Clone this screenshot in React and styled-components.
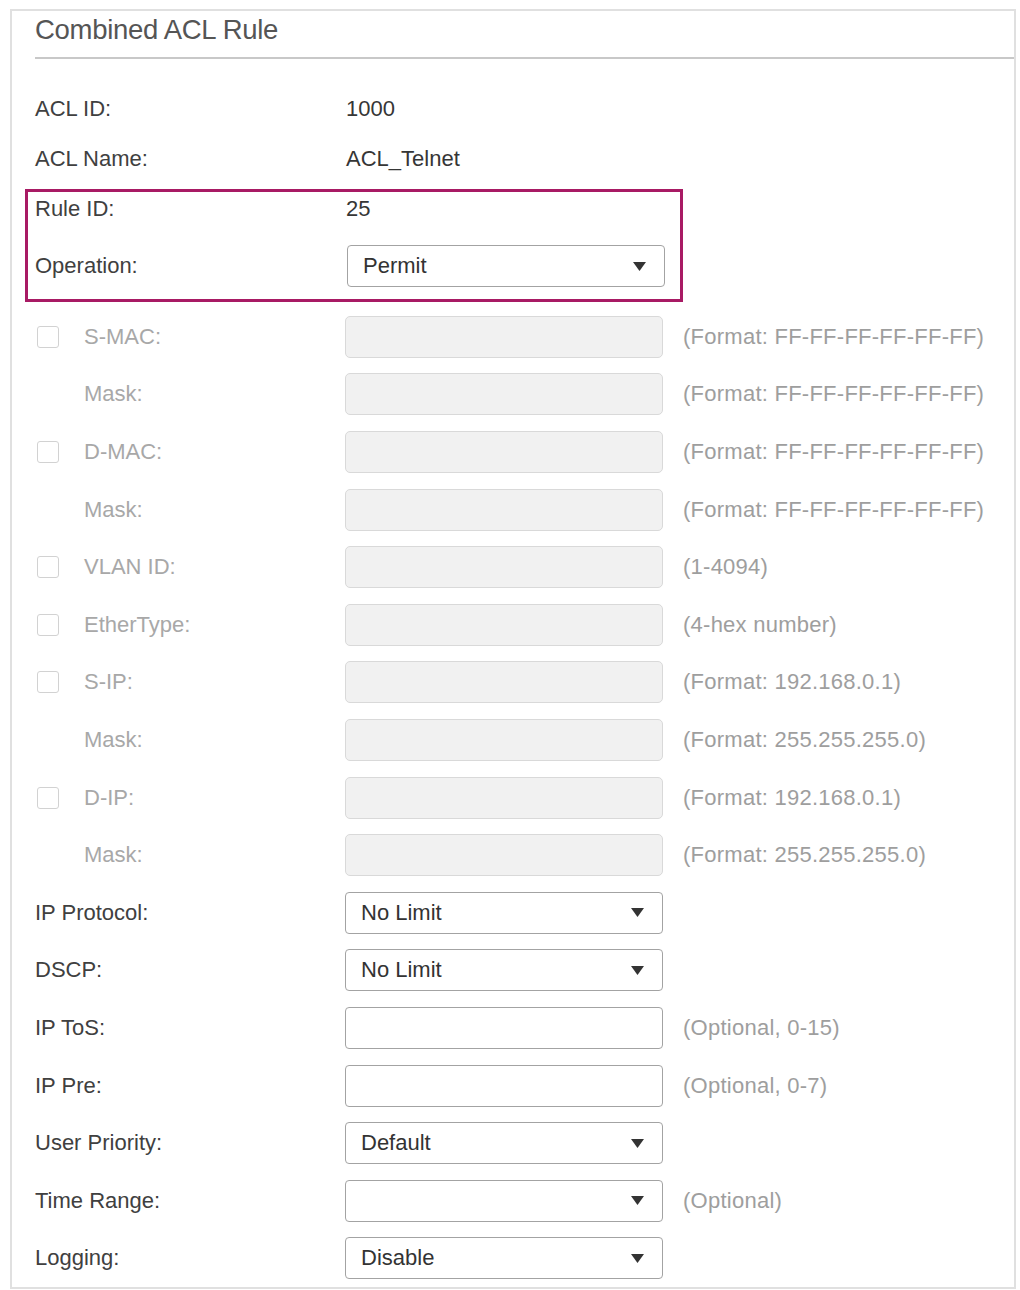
import React from 'react'
import styled, { createGlobalStyle } from 'styled-components'

const GlobalStyle = createGlobalStyle`
  html, body {
    margin: 0;
    padding: 0;
    background: #fff;
  }
  body {
    font-family: "Liberation Sans", Arial, sans-serif;
  }
`

const Page = styled.div`
  padding: 9px 0 0 10px;
`

const Frame = styled.div`
  width: 1006px;
  height: 1280px;
  box-sizing: border-box;
  border: 2px solid #e0e0e0;
`

const Header = styled.div`
  margin-left: 23px;
  height: 46px;
  line-height: 38px;
  font-size: 27.5px;
  letter-spacing: -0.3px;
  color: #555;
  border-bottom: 2px solid #c8c8c8;
`

const Body = styled.div`
  padding: 25px 0 0 23px;
`

const Row = styled.div`
  display: grid;
  grid-template-columns: 290px 318px auto;
  column-gap: 20px;
  align-items: center;
  height: ${p => p.$h}px;
  margin-top: ${p => p.$mt || 0}px;
  font-size: 22px;
`

const Highlight = styled.div`
  margin: 5px 0 0 -10px;
  width: 658px;
  box-sizing: border-box;
  border: 3px solid #a81a64;
  padding: 0 0 12px 7px;
`

const Group = styled.div`
  margin-top: 6px;
`

const LabelCell = styled.div`
  display: flex;
  align-items: center;
  padding-left: ${p => (p.$indent ? 49 : 0)}px;
  color: ${p => (p.$disabled ? '#a8a8a8' : '#404040')};
`

const Check = styled.span`
  width: 22px;
  height: 22px;
  box-sizing: border-box;
  border: 1.5px solid #d2d2d2;
  border-radius: 3px;
  margin: 0 25px 0 2px;
`

const Value = styled.div`
  color: #363636;
  padding-left: 1px;
`

const Input = styled.div`
  width: 318px;
  height: 42px;
  box-sizing: border-box;
  border: ${p => (p.$disabled ? '1px solid #d9d9d9' : '1.5px solid #a3a3a3')};
  background: ${p => (p.$disabled ? '#f1f1f1' : '#fff')};
  border-radius: ${p => (p.$disabled ? 5 : 4)}px;
`

const SelectBox = styled.div`
  width: 318px;
  height: 42px;
  box-sizing: border-box;
  border: 1.5px solid #a3a3a3;
  border-radius: 4px;
  background: #fff;
  display: flex;
  align-items: center;
  justify-content: space-between;
  padding: 0 18px 0 15px;
  margin-left: ${p => p.$shift || 0}px;
  color: #333;
`

const Hint = styled.div`
  color: #9e9e9e;
  letter-spacing: 0.25px;
  white-space: nowrap;
`

const Arrow = () => (
  <svg width="13" height="9" viewBox="0 0 13 9">
    <polygon points="0,0 13,0 6.5,9" fill="#333" />
  </svg>
)

const Select = ({ value, shift }) => (
  <SelectBox $shift={shift}>
    <span>{value}</span>
    <Arrow />
  </SelectBox>
)

const filters = [
  { label: 'S-MAC:', check: true, hint: '(Format: FF-FF-FF-FF-FF-FF)' },
  { label: 'Mask:', hint: '(Format: FF-FF-FF-FF-FF-FF)' },
  { label: 'D-MAC:', check: true, hint: '(Format: FF-FF-FF-FF-FF-FF)' },
  { label: 'Mask:', hint: '(Format: FF-FF-FF-FF-FF-FF)' },
  { label: 'VLAN ID:', check: true, hint: '(1-4094)' },
  { label: 'EtherType:', check: true, hint: '(4-hex number)' },
  { label: 'S-IP:', check: true, hint: '(Format: 192.168.0.1)' },
  { label: 'Mask:', hint: '(Format: 255.255.255.0)' },
  { label: 'D-IP:', check: true, hint: '(Format: 192.168.0.1)' },
  { label: 'Mask:', hint: '(Format: 255.255.255.0)' },
]

const options = [
  { label: 'IP Protocol:', select: 'No Limit' },
  { label: 'DSCP:', select: 'No Limit' },
  { label: 'IP ToS:', hint: '(Optional, 0-15)' },
  { label: 'IP Pre:', hint: '(Optional, 0-7)' },
  { label: 'User Priority:', select: 'Default' },
  { label: 'Time Range:', select: '', hint: '(Optional)' },
  { label: 'Logging:', select: 'Disable' },
]

const ROW = 57.6

const App = () => {
  return (
    <Page>
      <GlobalStyle />
      <Frame>
        <Header>Combined ACL Rule</Header>
        <Body>
          <Row $h={50}>
            <LabelCell>ACL ID:</LabelCell>
            <Value>1000</Value>
          </Row>
          <Row $h={50}>
            <LabelCell>ACL Name:</LabelCell>
            <Value>ACL_Telnet</Value>
          </Row>

          <Highlight>
            <Row $h={34}>
              <LabelCell>Rule ID:</LabelCell>
              <Value>25</Value>
            </Row>
            <Row $h={42} $mt={19}>
              <LabelCell>Operation:</LabelCell>
              <Select value="Permit" shift={2} />
            </Row>
          </Highlight>

          <Group>
            {filters.map((f, i) => (
              <Row $h={ROW} key={i}>
                <LabelCell $disabled $indent={!f.check}>
                  {f.check && <Check />}
                  {f.label}
                </LabelCell>
                <Input $disabled />
                <Hint>{f.hint}</Hint>
              </Row>
            ))}
            {options.map((o, i) => (
              <Row $h={ROW} key={i}>
                <LabelCell>{o.label}</LabelCell>
                {o.select !== undefined ? <Select value={o.select} /> : <Input />}
                {o.hint ? <Hint>{o.hint}</Hint> : <span />}
              </Row>
            ))}
          </Group>
        </Body>
      </Frame>
    </Page>
  )
}

export default App
